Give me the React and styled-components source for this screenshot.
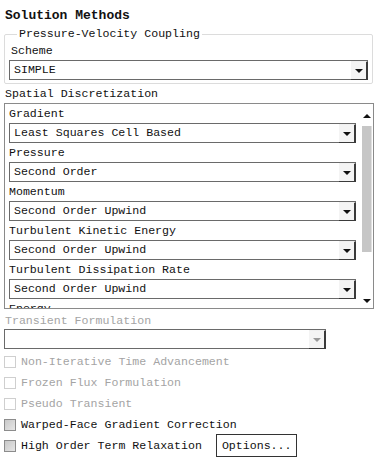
import React from 'react';
import styled, { createGlobalStyle } from 'styled-components';

const Global = createGlobalStyle`
  body {
    margin: 0;
    background: #fff;
    font-family: "Liberation Mono", "DejaVu Sans Mono", monospace;
    font-size: 11.6px;
    color: #111;
  }
`;

const Page = styled.div`
  width: 384px;
  height: 465px;
  overflow: hidden;
  background: #fff;
`;

const Title = styled.div`
  font-weight: bold;
  font-size: 13px;
  padding: 8px 0 0 5px;
  height: 19px;
  line-height: 16px;
`;

const Group = styled.fieldset`
  margin: 0 11px 0 4px;
  padding: 0 4px 3px 4px;
  border: 1px solid #dcdcdc;
  border-radius: 2px;
  legend {
    padding: 0 2px;
    margin-left: 8px;
    line-height: 14px;
  }
`;

const Label = styled.div`
  height: ${p => p.$h || 19}px;
  line-height: ${p => p.$h || 19}px;
  padding-left: ${p => p.$indent || 0}px;
  color: ${p => (p.$disabled ? '#a4a4a4' : '#111')};
  white-space: nowrap;
`;

const SelectBox = styled.div`
  display: flex;
  align-items: stretch;
  height: 20px;
  box-sizing: border-box;
  width: ${p => p.$width || 'auto'};
  border: 1px solid #6a6a6a;
  border-right: none;
  background: #fff;
  color: ${p => (p.$disabled ? '#a4a4a4' : '#111')};
`;

const SelectText = styled.div`
  flex: 1;
  padding-left: 4px;
  line-height: 18px;
  white-space: nowrap;
  overflow: hidden;
`;

const DropButton = styled.div`
  width: 15px;
  display: flex;
  align-items: center;
  justify-content: center;
  background: #f4f4f4;
  border-right: 2px solid #3a3a3a;
  margin-bottom: -1px;
  border-bottom: 1px solid #3a3a3a;
  border-top: 1px solid #f0f0f0;
`;

const Arrow = styled.span`
  width: 0;
  height: 0;
  border-left: 4px solid transparent;
  border-right: 4px solid transparent;
  ${p => (p.$up ? 'border-bottom' : 'border-top')}: 4px solid ${p => p.$color || '#111'};
`;

const Section = styled.div`
  padding-left: 5px;
  height: 17px;
  line-height: 15px;
  margin-top: 2px;
`;

const ScrollBox = styled.div`
  margin: 0 10px 0 4px;
  height: 206px;
  box-sizing: border-box;
  border: 1px solid #8a8a8a;
  display: grid;
  grid-template-columns: 1fr 12px;
  overflow: hidden;
`;

const ScrollContent = styled.div`
  padding: 0 5px 0 4px;
  overflow: hidden;
`;

const ScrollBar = styled.div`
  display: flex;
  flex-direction: column;
  align-items: center;
  padding: 10px 0 5px;
`;

const Thumb = styled.div`
  width: 10px;
  height: 126px;
  margin: 8px 0 0;
  background: #c6c6c6;
  border-right: 1px solid #e0e0e0;
  box-sizing: border-box;
`;

const Spacer = styled.div`
  flex: 1;
`;

const Lower = styled.div`
  padding: 4px 0 0 4px;
`;

const Checks = styled.div`
  margin-top: 2px;
`;

const CheckRow = styled.label`
  display: flex;
  align-items: center;
  gap: 5px;
  height: 21px;
  color: ${p => (p.$disabled ? '#a4a4a4' : '#111')};
  white-space: nowrap;
`;

const Box = styled.span`
  width: 12px;
  height: 12px;
  box-sizing: border-box;
  border: 1px solid ${p => (p.$disabled ? '#cfcfcf' : '#8c8c8c')};
  background: ${p => (p.$disabled ? '#fff' : 'linear-gradient(135deg, #c8c8c8, #e6e6e6)')};
  flex: none;
`;

const Button = styled.div`
  margin-left: 9px;
  height: 23px;
  box-sizing: border-box;
  padding: 0 5px;
  line-height: 21px;
  border: 1px solid #333;
  background: #fff;
`;

function Select({ value, disabled, width }) {
  return (
    <SelectBox $disabled={disabled} $width={width}>
      <SelectText>{value}</SelectText>
      <DropButton>
        <Arrow $color={disabled ? '#999' : '#111'} />
      </DropButton>
    </SelectBox>
  );
}

const fields = [
  ['Gradient', 'Least Squares Cell Based'],
  ['Pressure', 'Second Order'],
  ['Momentum', 'Second Order Upwind'],
  ['Turbulent Kinetic Energy', 'Second Order Upwind'],
  ['Turbulent Dissipation Rate', 'Second Order Upwind'],
  ['Energy', 'Second Order Upwind'],
];

export default function App() {
  return (
    <Page>
      <Global />
      <Title>Solution Methods</Title>
      <Group>
        <legend>Pressure-Velocity Coupling</legend>
        <Label $indent={2}>Scheme</Label>
        <Select value="SIMPLE" />
      </Group>
      <Section>Spatial Discretization</Section>
      <ScrollBox>
        <ScrollContent>
          {fields.map(([label, value]) => (
            <div key={label}>
              <Label>{label}</Label>
              <Select value={value} />
            </div>
          ))}
        </ScrollContent>
        <ScrollBar>
          <Arrow $up />
          <Thumb />
          <Spacer />
          <Arrow />
        </ScrollBar>
      </ScrollBox>
      <Lower>
        <Label $disabled $h={16} $indent={1}>Transient Formulation</Label>
        <Select value="" disabled width="322px" />
        <Checks>
          <CheckRow $disabled><Box $disabled />Non-Iterative Time Advancement</CheckRow>
          <CheckRow $disabled><Box $disabled />Frozen Flux Formulation</CheckRow>
          <CheckRow $disabled><Box $disabled />Pseudo Transient</CheckRow>
          <CheckRow><Box />Warped-Face Gradient Correction</CheckRow>
          <CheckRow>
            <Box />High Order Term Relaxation
            <Button>Options...</Button>
          </CheckRow>
        </Checks>
      </Lower>
    </Page>
  );
}
